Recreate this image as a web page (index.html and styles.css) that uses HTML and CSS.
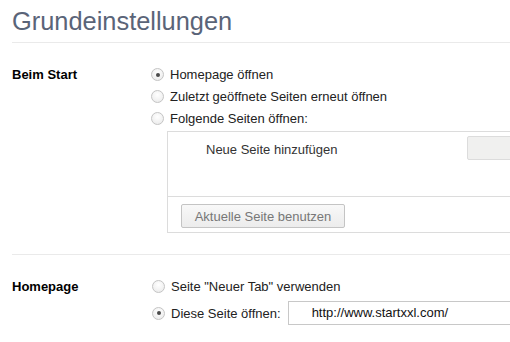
FILE: index.html
```html
<!DOCTYPE html>
<html>
<head>
<meta charset="utf-8">
<link rel="stylesheet" href="styles.css">
</head>
<body>
<div class="page">
  <h1 class="title">Grundeinstellungen</h1>
  <section class="section start">
    <div class="label">Beim Start</div>
    <div class="controls">
      <div class="radio-row"><span class="radio checked"></span><span>Homepage öffnen</span></div>
      <div class="radio-row"><span class="radio"></span><span>Zuletzt geöffnete Seiten erneut öffnen</span></div>
      <div class="radio-row"><span class="radio"></span><span>Folgende Seiten öffnen:</span></div>
      <div class="pages-box">
        <div class="pages-list">
          <span class="new-page">Neue Seite hinzufügen</span>
          <span class="new-input"></span>
        </div>
        <div class="pages-footer">
          <button class="btn">Aktuelle Seite benutzen</button>
        </div>
      </div>
    </div>
  </section>
  <section class="section home">
    <div class="label">Homepage</div>
    <div class="controls">
      <div class="radio-row"><span class="radio"></span><span>Seite "Neuer Tab" verwenden</span></div>
      <div class="radio-row url-row"><span class="radio checked"></span><span>Diese Seite öffnen:</span><span class="url-input">http://www.startxxl.com/</span></div>
    </div>
  </section>
</div>
</body>
</html>
```
FILE: styles.css
```css
html, body {
  margin: 0;
  padding: 0;
  background: #fff;
  overflow: hidden;
}
body {
  font-family: "Liberation Sans", Arial, sans-serif;
  font-size: 13px;
  color: #303030;
  width: 510px;
  height: 342px;
}
.page {
  padding-left: 12px;
}
.title {
  margin: 0;
  padding-top: 6px;
  height: 36px;
  font-weight: normal;
  font-size: 25.4px;
  line-height: 30px;
  color: #5a6478;
  border-bottom: 1px solid #eaeaea;
}
.section {
  display: flex;
}
.start {
  padding-top: 23px;
  height: 188px;
  border-bottom: 1px solid #eaeaea;
}
.home {
  padding-top: 23px;
}
.label {
  width: 140px;
  font-weight: bold;
  color: #000;
  line-height: 17px;
}
.controls {
  flex: 1;
  display: flex;
  flex-direction: column;
}
.radio-row {
  display: flex;
  align-items: center;
  height: 17px;
  margin-bottom: 5px;
  color: #222;
}
.radio {
  width: 11px;
  height: 11px;
  border-radius: 50%;
  border: 1px solid #c4c4c4;
  background: radial-gradient(circle at 50% 35%, #ffffff 0%, #e8e8e8 100%);
  margin-right: 6px;
  margin-left: 0;
  box-sizing: content-box;
  position: relative;
}
.radio.checked::after {
  content: "";
  position: absolute;
  left: 3.5px;
  top: 3.5px;
  width: 4px;
  height: 4px;
  border-radius: 50%;
  background: #4a4a4a;
}
.pages-box {
  margin-left: 16px;
  margin-top: -1px;
  margin-right: -20px;
  border: 1px solid #dcdcdc;
  height: 100px;
  display: flex;
  flex-direction: column;
}
.pages-list {
  height: 65px;
  flex: none;
  display: flex;
  align-items: flex-start;
  padding-top: 4px;
  box-sizing: border-box;
  border-bottom: 1px solid #dcdcdc;
}
.new-page {
  margin-left: 38px;
  margin-top: 6px;
  color: #333;
  width: 261px;
}
.new-input {
  width: 60px;
  height: 22px;
  border: 1px solid #dcdcdc;
  border-radius: 2px;
  background: #f0f0ef;
}
.pages-footer {
  padding: 7px 0 0 13px;
}
.btn {
  font-family: "Liberation Sans", Arial, sans-serif;
  font-size: 13px;
  color: #777;
  height: 24px;
  width: 164px;
  padding: 0;
  border: 1px solid #c4c4c4;
  border-radius: 2px;
  background: linear-gradient(#f8f8f8, #ececec);
}
.url-row {
  height: 24px;
  margin-top: 1px;
}
.url-input {
  margin-left: 7px;
  flex: 1;
  margin-right: -20px;
  height: 22px;
  line-height: 22px;
  border: 1px solid #c8c8c8;
  padding-left: 23px;
  color: #111;
}
```
